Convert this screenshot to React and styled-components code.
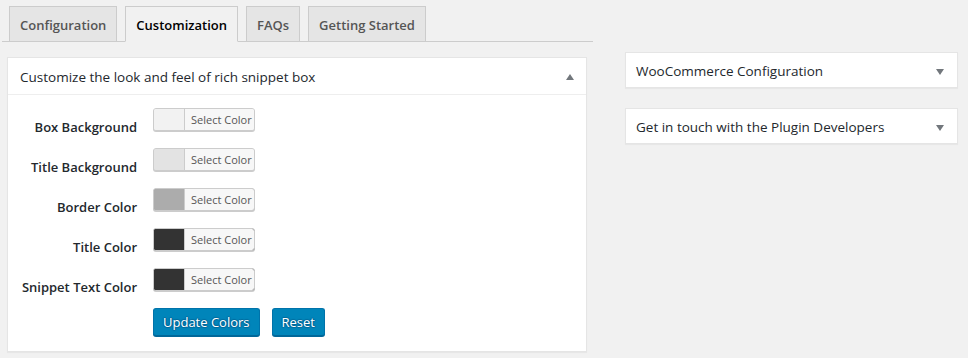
import React from "react";
import styled, { createGlobalStyle } from "styled-components";

const Global = createGlobalStyle`
  html, body { margin: 0; padding: 0; background: #f1f1f1; }
  body {
    font-family: "Open Sans", "Noto Sans", Arial, sans-serif;
    font-size: 13px;
    color: #23282d;
    width: 968px;
    height: 358px;
    overflow: hidden;
  }
`;

const Page = styled.div`
  display: flex;
  align-items: flex-start;
  padding-left: 2px;
`;

const LeftCol = styled.div`
  width: 591px;
  padding-top: 6px;
`;

const RightCol = styled.div`
  width: 333px;
  margin-left: 32px;
  padding-top: 52px;
  display: flex;
  flex-direction: column;
  gap: 20px;
`;

const TabBar = styled.div`
  display: flex;
  align-items: flex-end;
  gap: 8px;
  padding-left: 7px;
  border-bottom: 1px solid #ccc;
  height: 35px;
`;

const Tab = styled.div`
  box-sizing: border-box;
  height: ${(p) => (p.$active ? "36px" : "35px")};
  margin-bottom: ${(p) => (p.$active ? "-1px" : "0")};
  padding: 6px 10px 4px;
  border: 1px solid #ccc;
  border-bottom: ${(p) => (p.$active ? "1px solid #f1f1f1" : "none")};
  background: ${(p) => (p.$active ? "#f1f1f1" : "#e5e5e5")};
  color: ${(p) => (p.$active ? "#000" : "#555")};
  font-size: 13px;
  font-weight: 600;
  line-height: 24px;
  white-space: nowrap;
`;

const Box = styled.div`
  margin: 15px 0 0 5px;
  width: 580px;
  box-sizing: border-box;
  background: #fff;
  border: 1px solid #e5e5e5;
  box-shadow: 0 1px 1px rgba(0, 0, 0, 0.04);
`;

const BoxHeader = styled.div`
  display: flex;
  align-items: center;
  justify-content: space-between;
  height: 37px;
  box-sizing: border-box;
  padding: 1px 12px 0;
  border-bottom: ${(p) => (p.$open ? "1px solid #eee" : "none")};
  font-size: 13.5px;
  line-height: 20px;
  color: #23282d;
`;

const SideBox = styled(Box)`
  margin: 0;
  width: 333px;
`;

const SideHeader = styled(BoxHeader)`
  height: 34px;
  padding: 2px 13px 0 10px;
`;

const Arrow = styled.span`
  width: 0;
  height: 0;
  border-left: 4.5px solid transparent;
  border-right: 4.5px solid transparent;
  ${(p) =>
    p.$up
      ? "border-bottom: 6px solid #72777c; margin-top: 1px;"
      : "border-top: 6px solid #72777c; margin-top: 2px;"}
`;

const BoxBody = styled.div`
  padding: 13px 0 15px 0;
`;

const Row = styled.div`
  display: flex;
  align-items: flex-start;
  height: 40px;
`;

const Label = styled.div`
  width: 129px;
  margin-right: 16px;
  text-align: right;
  font-size: 13px;
  font-weight: 600;
  line-height: 20px;
  padding-top: 9px;
  color: #23282d;
  white-space: nowrap;
`;

const ColorButton = styled.div`
  display: flex;
  height: 23px;
  box-sizing: border-box;
  border: 1px solid #ccc;
  border-radius: 3px;
  overflow: hidden;
  box-shadow: 0 1px 0 #ccc;
  background: ${(p) => p.$color};
`;

const Swatch = styled.span`
  width: 30px;
  background: ${(p) => p.$color};
`;

const SwatchText = styled.span`
  border-left: 1px solid #ccc;
  background: #f7f7f7;
  color: #555;
  font-size: 11px;
  line-height: 21px;
  padding: 0 2px 0 6px;
  white-space: nowrap;
`;

const Actions = styled.div`
  display: flex;
  gap: 12px;
  padding-left: 145px;
`;

const PrimaryButton = styled.button`
  height: 28px;
  box-sizing: border-box;
  padding: 0 9px;
  font-family: inherit;
  font-size: 13px;
  line-height: 26px;
  color: #fff;
  background: #0085ba;
  border: 1px solid #0073aa;
  border-bottom-color: #006799;
  border-radius: 3px;
  box-shadow: 0 1px 0 #006799;
  text-shadow: 0 -1px 1px #006799, 1px 0 1px #006799, 0 1px 1px #006799,
    -1px 0 1px #006799;
  cursor: pointer;
`;

const colors = [
  ["Box Background", "#f2f2f2"],
  ["Title Background", "#e3e3e3"],
  ["Border Color", "#acacac"],
  ["Title Color", "#333333"],
  ["Snippet Text Color", "#333333"],
];

export default function App() {
  return (
    <>
      <Global />
      <Page>
        <LeftCol>
          <TabBar>
            <Tab>Configuration</Tab>
            <Tab $active>Customization</Tab>
            <Tab>FAQs</Tab>
            <Tab>Getting Started</Tab>
          </TabBar>
          <Box>
            <BoxHeader $open>
              <span>Customize the look and feel of rich snippet box</span>
              <Arrow $up />
            </BoxHeader>
            <BoxBody>
              {colors.map(([label, c]) => (
                <Row key={label}>
                  <Label>{label}</Label>
                  <ColorButton $color={c}>
                    <Swatch $color={c} />
                    <SwatchText>Select Color</SwatchText>
                  </ColorButton>
                </Row>
              ))}
              <Actions>
                <PrimaryButton>Update Colors</PrimaryButton>
                <PrimaryButton>Reset</PrimaryButton>
              </Actions>
            </BoxBody>
          </Box>
        </LeftCol>
        <RightCol>
          <SideBox>
            <SideHeader>
              <span>WooCommerce Configuration</span>
              <Arrow />
            </SideHeader>
          </SideBox>
          <SideBox>
            <SideHeader>
              <span>Get in touch with the Plugin Developers</span>
              <Arrow />
            </SideHeader>
          </SideBox>
        </RightCol>
      </Page>
    </>
  );
}
